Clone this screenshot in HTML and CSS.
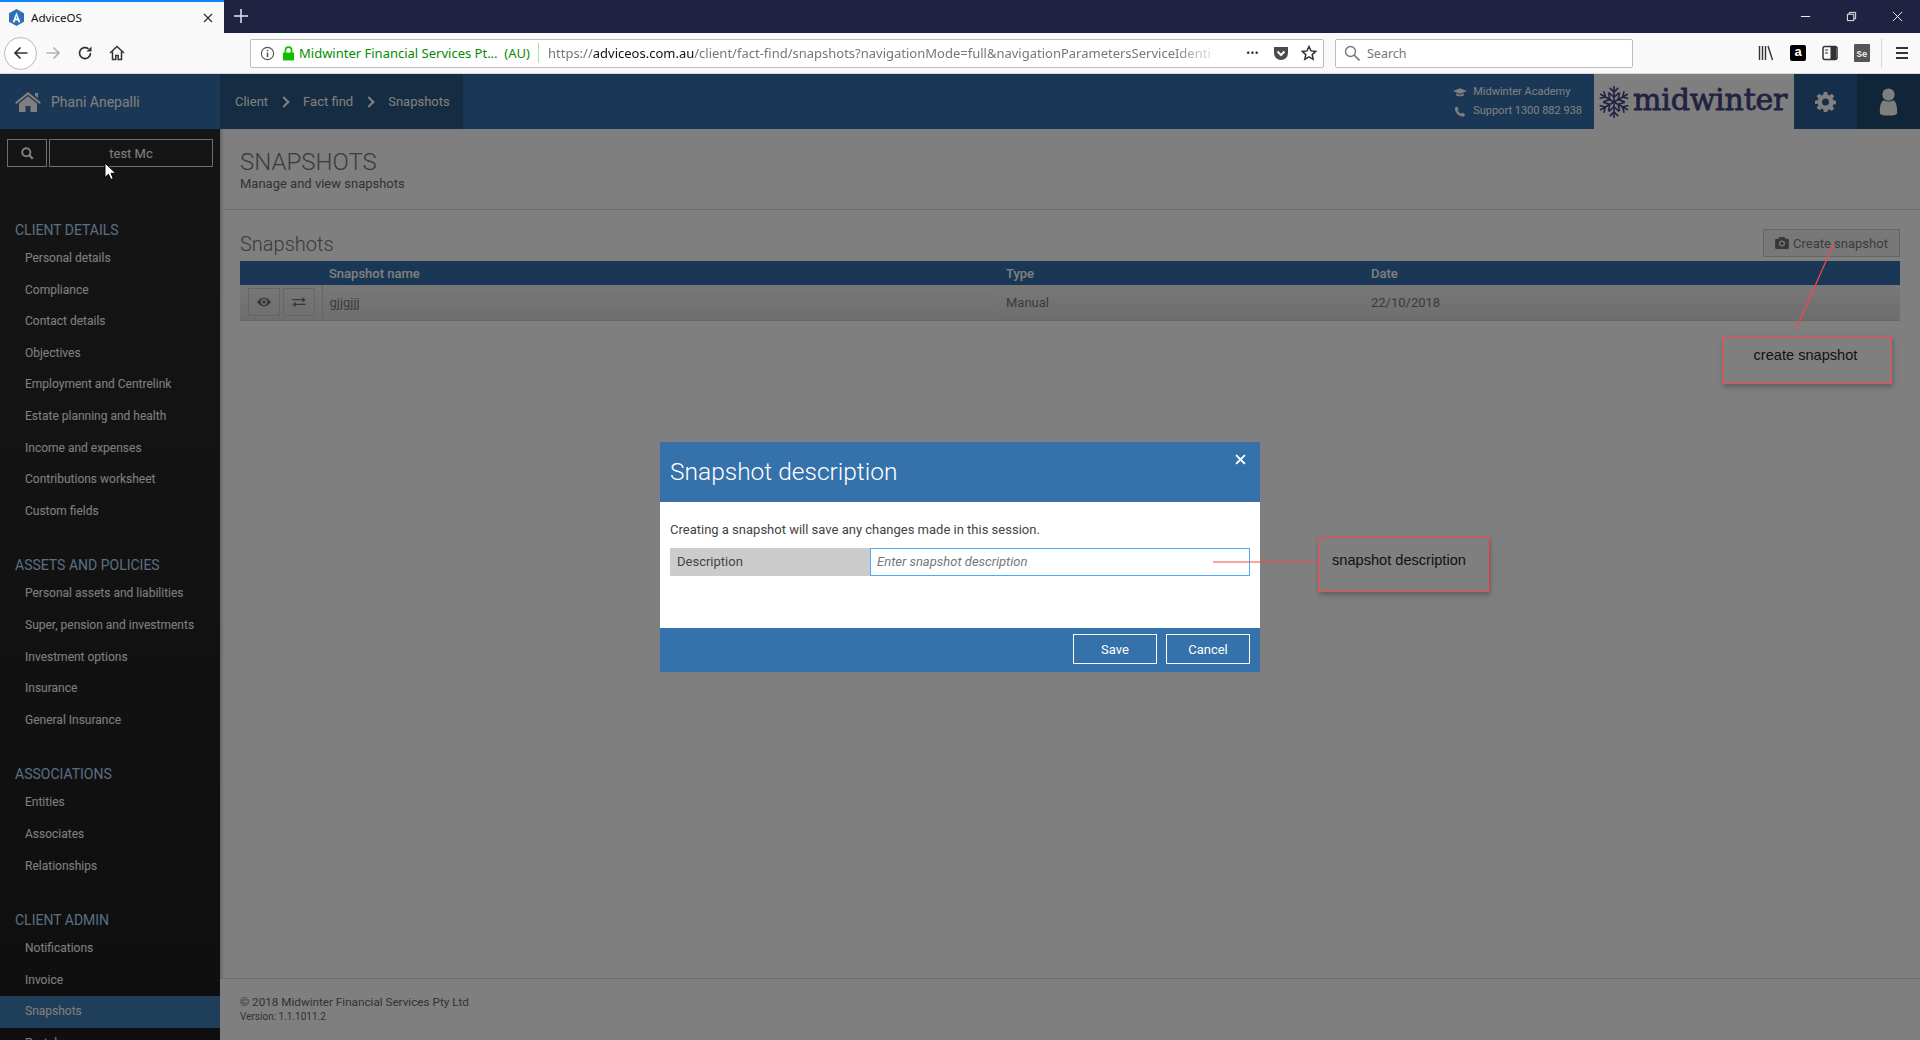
FILE: index.html
```html
<!DOCTYPE html>
<html lang="en">
<head>
  <meta charset="UTF-8" />
  <title>AdviceOS</title>
  <link rel="stylesheet" href="styles.css">
</head>
<body>

  <!-- Browser tab strip -->
  <div class="tabstrip">
    <div class="tab">
      <svg class="tab-logo" viewBox="0 0 16 18"><path d="M8 0l8 4.500v9L8 18l-8-4.500v-9z" fill="#2f6fb5"/><path d="M8 3.500l4.200 10.500h-2.200l-.7-2H6.700L6 14H3.800zM8 7.500L7.300 10h1.400z" fill="#fff"/></svg>
      <span class="tab-title">AdviceOS</span>
      <svg class="tab-close" viewBox="0 0 10 10"><path d="M1 1l8 8M9 1l-8 8" stroke="#333" stroke-width="1.300"/></svg>
    </div>
    <svg class="tab-new" viewBox="0 0 14 14"><path d="M7 0v14M0 7h14" stroke="#e6e6ea" stroke-width="1.500"/></svg>
    <div class="win-controls">
      <svg viewBox="0 0 12 12"><path d="M1 6h10" stroke="#fff"/></svg>
      <svg viewBox="0 0 12 12"><path d="M1.500 3.500h7v7h-7zM3.500 3.500v-2h7v7h-2" stroke="#fff" fill="none"/></svg>
      <svg viewBox="0 0 12 12"><path d="M1 1l10 10M11 1L1 11" stroke="#fff"/></svg>
    </div>
  </div>

  <!-- Browser toolbar -->
  <div class="toolbar">
    <div class="nav-buttons">
      <span class="back-btn"><svg viewBox="0 0 16 16"><path d="M14.500 8H2M7.500 2.500L2 8l5.500 5.500" stroke="#333" stroke-width="1.700" fill="none"/></svg></span>
      <span class="nav-btn"><svg viewBox="0 0 16 16"><path d="M1.500 8H14M8.500 2.500L14 8l-5.500 5.500" stroke="#b4b4b6" stroke-width="1.700" fill="none"/></svg></span>
      <span class="nav-btn"><svg viewBox="0 0 16 16"><path d="M13.500 8A5.500 5.500 0 1 1 11.500 3.800" stroke="#333" stroke-width="1.700" fill="none"/><path d="M14.500 1.500v5h-5z" fill="#333"/></svg></span>
      <span class="nav-btn"><svg viewBox="0 0 16 16"><path d="M1 8l7-6.500L15 8M3.500 6.500V14.500h3.300v-4h2.400v4h3.300V6.500" stroke="#333" stroke-width="1.500" fill="none"/></svg></span>
    </div>
    <div class="urlbar">
      <svg class="url-info" viewBox="0 0 16 16"><circle cx="8" cy="8" r="6.500" stroke="#555" fill="none" stroke-width="1.200"/><path d="M8 7v5M8 4v1.600" stroke="#555" stroke-width="1.600"/></svg>
      <svg class="url-lock" viewBox="0 0 14 16"><path d="M1 7h12v8.500H1z" fill="#12bc00"/><path d="M3.700 7.500V4.500a3.300 3.300 0 0 1 6.600 0v3" stroke="#12bc00" stroke-width="1.800" fill="none"/></svg>
      <span class="url-org">Midwinter Financial Services Pt...&nbsp; (AU)</span>
      <span class="url-divider"></span>
      <span class="url-text">https://<b>adviceos.com.au</b>/client/fact-find/snapshots?navigationMode=full&amp;navigationParametersServiceIdenti</span>
      <span class="url-dots">•••</span>
      <svg class="url-icon" viewBox="0 0 16 16"><path d="M1 2h14a1 1 0 0 1 0 .5V8a7 7 0 0 1-14 0V2.500A1 1 0 0 1 1 2z" fill="#4a4a4f"/><path d="M4.500 6.500L8 10l3.500-3.500" stroke="#fff" stroke-width="2" fill="none"/></svg>
      <svg class="url-icon" viewBox="0 0 16 16"><path d="M8 1.500l2 4.400 4.800.5-3.600 3.200 1 4.700L8 11.900l-4.200 2.400 1-4.700L1.200 6.400 6 5.900z" stroke="#333" stroke-width="1.500" fill="none"/></svg>
    </div>
    <div class="searchbar">
      <svg viewBox="0 0 16 16"><circle cx="6.500" cy="6.500" r="5" stroke="#777" stroke-width="1.400" fill="none"/><path d="M10 10l5.500 5.500" stroke="#777" stroke-width="1.600"/></svg>
      <span>Search</span>
    </div>
    <div class="tool-icons">
      <svg viewBox="0 0 16 16"><path d="M1.500 1v14M4.500 1v14M7.500 1v14M10 1l4.500 14" stroke="#333" stroke-width="1.400" fill="none"/></svg>
      <span class="amazon-icon">a</span>
      <svg viewBox="0 0 16 16"><rect x="1" y="1.500" width="14" height="13" rx="2" stroke="#333" stroke-width="1.500" fill="none"/><path d="M8.500 2v12h5.500V2z" fill="#333"/><path d="M3 5h3M3 8h3" stroke="#333"/></svg>
      <span class="se-icon">Se</span>
      <span class="tool-sep"></span>
      <svg viewBox="0 0 16 16"><path d="M2 3h12M2 8h12M2 13h12" stroke="#333" stroke-width="1.800"/></svg>
    </div>
  </div>

  <!-- The page itself, with modal open -->
  <div class="page">
    <header class="app-header">
      <div class="user-home">
        <svg viewBox="0 0 26 20"><path d="M13 0l13 10.500-1.300 1.500L13 2.700 1.300 12 0 10.500zM4 11.500L13 4.300l9 7.200V20h-6.500v-6h-5v6H4zM20 1h3v5l-3-2.500z" fill="#fff"/></svg>
        <span>Phani Anepalli</span>
      </div>
      <nav class="crumbs">
        <a>Client</a><i class="chev"></i><a>Fact find</a><i class="chev"></i><a>Snapshots</a>
      </nav>
      <div class="header-links">
        <div>
          <svg viewBox="0 0 20 14"><path d="M10 1l10 4-10 4L0 5zM4.500 8.500V11c2 2 9 2 11 0V8.500L10 10.700z" fill="#fff"/></svg>
          Midwinter Academy
        </div>
        <div>
          <svg viewBox="0 0 14 14"><path d="M3 .5l2.500 3.500-1.500 1.500c.7 1.800 2.300 3.500 4.300 4.300L10 8.300l3.500 2.500c-.4 1.500-1.500 2.700-2.800 2.700C5.500 13.500.5 8.500.5 3.300.5 2 1.500.9 3 .5z" fill="#fff"/></svg>
          Support 1300 882 938
        </div>
      </div>
      <div class="logo">
        <svg class="logo-flake" viewBox="-18 -18 36 36">
          <g stroke="#3f4782" stroke-width="1.700" fill="none">
            <path d="M0 0V-17M-4.500 -15L0 -10.500 4.500 -15M-5.500 -10L0 -5 5.500 -10"/>
            <path transform="rotate(60)" d="M0 0V-17M-4.500 -15L0 -10.500 4.500 -15M-5.500 -10L0 -5 5.500 -10"/>
            <path transform="rotate(120)" d="M0 0V-17M-4.500 -15L0 -10.500 4.500 -15M-5.500 -10L0 -5 5.500 -10"/>
            <path transform="rotate(180)" d="M0 0V-17M-4.500 -15L0 -10.500 4.500 -15M-5.500 -10L0 -5 5.500 -10"/>
            <path transform="rotate(240)" d="M0 0V-17M-4.500 -15L0 -10.500 4.500 -15M-5.500 -10L0 -5 5.500 -10"/>
            <path transform="rotate(300)" d="M0 0V-17M-4.500 -15L0 -10.500 4.500 -15M-5.500 -10L0 -5 5.500 -10"/>
          </g>
        </svg>
        <span class="logo-text">midwinter</span>
      </div>
      <div class="gear-btn">
        <svg viewBox="0 0 24 24"><path fill-rule="evenodd" d="M10 1h4l.6 3.200 1.900.8 2.700-1.900 2.800 2.800-1.900 2.700.8 1.900L24 11v4l-3.100.5-.8 1.900 1.900 2.700-2.800 2.800-2.700-1.900-1.900.8L14 24h-4l-.6-3.200-1.900-.8-2.700 1.900L2 19.100l1.900-2.700-.8-1.900L0 15v-4l3.100-.5.800-1.900L2 5.900 4.800 3.100 7.500 5l1.900-.8zM12 8.500a4 4 0 1 0 0 8 4 4 0 0 0 0-8z" fill="#fff"/></svg>
      </div>
      <div class="user-btn">
        <svg viewBox="0 0 22 34"><circle cx="11" cy="8" r="7.500" fill="#fff"/><path d="M5 15c-3 2-4.500 6-4.500 15 0 2 3 3.500 10.500 3.500S21.500 32 21.500 30c0-9-1.500-13-4.500-15-3.500 2-8.500 2-12 0z" fill="#fff"/></svg>
      </div>
    </header>

    <div class="app-body">
      <aside class="sidebar">
        <div class="side-search">
          <span class="side-search-btn"><svg viewBox="0 0 16 16"><circle cx="6.500" cy="6.500" r="5" stroke="#fff" stroke-width="2.400" fill="none"/><path d="M10 10l4.500 4.500" stroke="#fff" stroke-width="2.800"/></svg></span>
          <span class="side-search-box">test Mc</span>
        </div>

        <h3>CLIENT DETAILS</h3>
        <a>Personal details</a>
        <a>Compliance</a>
        <a>Contact details</a>
        <a>Objectives</a>
        <a>Employment and Centrelink</a>
        <a>Estate planning and health</a>
        <a>Income and expenses</a>
        <a>Contributions worksheet</a>
        <a>Custom fields</a>

        <h3>ASSETS AND POLICIES</h3>
        <a>Personal assets and liabilities</a>
        <a>Super, pension and investments</a>
        <a>Investment options</a>
        <a>Insurance</a>
        <a>General Insurance</a>

        <h3>ASSOCIATIONS</h3>
        <a>Entities</a>
        <a>Associates</a>
        <a>Relationships</a>

        <h3>CLIENT ADMIN</h3>
        <a>Notifications</a>
        <a>Invoice</a>
        <a class="active">Snapshots</a>
        <a>Portal</a>
      </aside>

      <main class="content">
        <div class="page-head">
          <h1>SNAPSHOTS</h1>
          <p>Manage and view snapshots</p>
        </div>

        <section class="panel">
          <div class="panel-title">
            <h2>Snapshots</h2>
            <button class="create-btn">
              <svg viewBox="0 0 16 14"><path fill-rule="evenodd" d="M5 0h6l1 2h2.500A1.500 1.500 0 0 1 16 3.500v9a1.500 1.500 0 0 1-1.500 1.500h-13A1.500 1.500 0 0 1 0 12.500v-9A1.500 1.500 0 0 1 1.500 2H4zM8 4a3.500 3.500 0 1 0 0 7 3.500 3.500 0 0 0 0-7zm0 1.500a2 2 0 1 1 0 4 2 2 0 0 1 0-4z" fill="#707070"/></svg>
              Create snapshot
            </button>
          </div>
          <table class="snap-table">
            <colgroup>
              <col class="col-actions"><col class="col-name"><col class="col-type"><col>
            </colgroup>
            <thead>
              <tr><th></th><th>Snapshot name</th><th>Type</th><th>Date</th></tr>
            </thead>
            <tbody>
              <tr>
                <td class="row-actions">
                  <span class="row-btn"><svg viewBox="0 0 16 10"><path fill-rule="evenodd" d="M8 0c3.500 0 6.300 2.300 8 5-1.700 2.700-4.500 5-8 5S1.700 7.700 0 5c1.700-2.700 4.500-5 8-5zm0 1.500a3.500 3.500 0 1 0 0 7 3.500 3.500 0 0 0 0-7z" fill="#707070"/><circle cx="8" cy="5" r="2" fill="#707070"/></svg></span>
                  <span class="row-btn"><svg viewBox="0 0 16 12"><path d="M0 2.500h12V0l4 3.500-4 3V4H0zM16 8H4V5.500L0 9l4 3V9.500h12z" fill="#707070"/></svg></span>
                </td>
                <td><a class="snap-link">gjjgjjj</a></td>
                <td>Manual</td>
                <td>22/10/2018</td>
              </tr>
            </tbody>
          </table>
        </section>

        <footer class="page-foot">
          <div class="copy">© 2018 Midwinter Financial Services Pty Ltd</div>
          <div class="version">Version: 1.1.1011.2</div>
        </footer>
      </main>
    </div>

    <!-- Modal -->
    <div class="backdrop">
      <div class="modal">
        <div class="modal-head">
          <h2>Snapshot description</h2>
          <svg class="modal-close" viewBox="0 0 10 10"><path d="M1 1l8 8M9 1l-8 8" stroke="#fff" stroke-width="1.800"/></svg>
        </div>
        <div class="modal-body">
          <p>Creating a snapshot will save any changes made in this session.</p>
          <div class="field">
            <label>Description</label>
            <input type="text" placeholder="Enter snapshot description">
          </div>
        </div>
        <div class="modal-foot">
          <button>Save</button>
          <button>Cancel</button>
        </div>
      </div>
    </div>
  </div>

  <!-- Red notes drawn on top of the screenshot -->
  <svg class="note-lines" viewBox="0 0 1920 1040">
    <path d="M1834 243L1796 329M1213 562H1318" stroke="#ff4545" stroke-width="1.200" fill="none"/>
  </svg>
  <div class="note note-create">create snapshot</div>
  <div class="note note-desc">snapshot description</div>

  <svg class="cursor" viewBox="0 0 12 19"><path d="M1 1v14.500l3.500-3.300 2.300 5.300 2.500-1-2.300-5.200h4.800z" fill="#fff" stroke="#000"/></svg>

</body>
</html>
```

FILE: styles.css
```css
* {
  box-sizing: border-box;
}

html, body {
  height: 100%;
}

body {
  margin: 0;
  position: relative;
  overflow: hidden;
  font-family: 'Roboto', sans-serif;
  font-size: 13px;
  color: #888;
  background: #fff;
}

/* Browser chrome */
.tabstrip {
  display: flex;
  align-items: stretch;
  height: 33px;
  background: #1f2341;
  font-family: 'Noto Sans', sans-serif;
}

.tab {
  display: flex;
  align-items: center;
  width: 224px;
  padding: 0 11px 0 9px;
  background: #f9f9fa;
  border-top: 2px solid #0a84ff;
  font-size: 11.6px;
  color: #111;
}

.tab-logo {
  width: 15px;
  height: 17px;
}

.tab-title {
  flex: 1;
  margin-left: 7px;
}

.tab-close {
  width: 10px;
  height: 10px;
}

.tab-new {
  width: 14px;
  height: 14px;
  margin: 9px 0 0 10px;
}

.win-controls {
  display: flex;
  align-items: center;
  gap: 35px;
  margin-left: auto;
  padding-right: 17px;
}

.win-controls svg {
  width: 11px;
  height: 11px;
}

.toolbar {
  display: flex;
  align-items: center;
  height: 41px;
  background: #f9f9fa;
  border-bottom: 1px solid #d8d8da;
  font-family: 'Noto Sans', sans-serif;
  font-size: 13px;
}

.nav-buttons {
  display: flex;
  align-items: center;
  width: 250px;
  padding-left: 4px;
}

.back-btn {
  display: flex;
  align-items: center;
  justify-content: center;
  width: 33px;
  height: 33px;
  border: 1px solid #b8b8ba;
  border-radius: 50%;
  background: #fff;
}

.back-btn svg {
  width: 16px;
  height: 16px;
}

.nav-btn {
  display: flex;
  justify-content: center;
  width: 32px;
}

.nav-btn svg {
  width: 16px;
  height: 16px;
}

.urlbar {
  display: flex;
  align-items: center;
  width: 1074px;
  height: 29px;
  padding: 0 6px 0 9px;
  background: #fff;
  border: 1px solid #bdbdbd;
  border-radius: 2px;
}

.url-info {
  width: 15px;
  height: 15px;
}

.url-lock {
  width: 13px;
  height: 15px;
  margin-left: 7px;
}

.url-org {
  margin-left: 4px;
  color: #058b00;
  white-space: nowrap;
}

.url-divider {
  width: 1px;
  height: 20px;
  margin: 0 9px 0 8px;
  background: #a9e5a4;
}

.url-text {
  flex: 1;
  overflow: hidden;
  white-space: nowrap;
  color: #777;
  -webkit-mask-image: linear-gradient(to right, #000 93%, transparent 100%);
}

.url-text b {
  font-weight: 400;
  color: #111;
}

.url-dots {
  margin: 0 7px 0 25px;
  font-size: 10px;
  letter-spacing: 0.5px;
  color: #333;
}

.url-icon {
  width: 16px;
  height: 16px;
  margin-left: 7px;
}

.url-icon + .url-icon {
  margin-left: 12px;
}

.searchbar {
  display: flex;
  align-items: center;
  gap: 7px;
  width: 298px;
  height: 29px;
  margin-left: 11px;
  padding-left: 8px;
  background: #fff;
  border: 1px solid #bdbdbd;
  border-radius: 2px;
  font-size: 12.5px;
  color: #777;
}

.searchbar svg {
  width: 16px;
  height: 16px;
}

.tool-icons {
  display: flex;
  align-items: center;
  gap: 16px;
  margin-left: 125px;
}

.tool-icons svg {
  width: 16px;
  height: 16px;
}

.amazon-icon {
  width: 16px;
  height: 16px;
  border-radius: 2px;
  background: #000;
  color: #fff;
  font: 700 13px/14px 'Liberation Sans', sans-serif;
  text-align: center;
}

.se-icon {
  width: 16px;
  height: 18px;
  padding-top: 5px;
  border-radius: 1px;
  background: #555;
  color: #eee;
  font: 700 9px/12px 'Liberation Mono', monospace;
  text-align: center;
}

.tool-sep {
  width: 1px;
  height: 30px;
  margin: 0 -4px 0 -5px;
  background: #d8d8da;
}

/* App */
.page {
  position: relative;
  display: flex;
  flex-direction: column;
  height: 966px;
  overflow: hidden;
}

.app-header {
  display: flex;
  align-items: stretch;
  flex: none;
  height: 55px;
  background: #3570aa;
  color: #fff;
}

.user-home {
  display: flex;
  align-items: center;
  width: 220px;
  padding-left: 15px;
  font-size: 14px;
}

.user-home svg {
  width: 26px;
  height: 20px;
  margin-right: 10px;
}

.crumbs {
  display: flex;
  align-items: center;
  width: 243px;
  padding-left: 15px;
  background: #2a5887;
  font-size: 13px;
}

.chev {
  width: 8px;
  height: 8px;
  margin: 0 15px 0 12px;
  border-top: 2px solid #fff;
  border-right: 2px solid #fff;
  transform: rotate(45deg);
}

.header-links {
  display: flex;
  flex-direction: column;
  justify-content: center;
  gap: 7px;
  margin-left: auto;
  padding-right: 12px;
  font-size: 11px;
  line-height: 12px;
}

.header-links div {
  display: flex;
  align-items: center;
}

.header-links svg {
  width: 14px;
  height: 11px;
  margin-right: 6px;
}

.logo {
  display: flex;
  align-items: center;
  width: 200px;
  padding-left: 3px;
  background: #fff;
}

.logo-flake {
  width: 34px;
  height: 36px;
}

.logo-text {
  margin: -4px 0 0 2px;
  color: #3f4782;
  font: 400 30px/36px 'DejaVu Serif', serif;
  -webkit-text-stroke: 0.8px #3f4782;
  letter-spacing: -0.2px;
}

.gear-btn,
.user-btn {
  display: flex;
  align-items: center;
  justify-content: center;
  width: 63px;
  background: #2a5f95;
}

.gear-btn svg {
  width: 21px;
  height: 21px;
}

.user-btn {
  background: #234a72;
}

.user-btn svg {
  width: 21px;
  height: 28px;
}

.app-body {
  display: flex;
  flex: 1;
  min-height: 0;
}

/* Sidebar */
.sidebar {
  flex: none;
  width: 220px;
  background: linear-gradient(#2a2a2a, #1e1e1e);
  color: #fff;
  font-size: 12px;
}

.side-search {
  display: flex;
  gap: 2px;
  padding: 10px 7px 0;
  margin-bottom: 50px;
}

.side-search span {
  display: flex;
  align-items: center;
  justify-content: center;
  height: 28px;
  border: 1px solid #ddd;
}

.side-search-btn {
  width: 40px;
}

.side-search-btn svg {
  width: 13px;
  height: 13px;
}

.side-search-box {
  width: 164px;
  font-size: 13px;
}

.sidebar h3 {
  height: 26px;
  margin: 25px 0 0;
  padding-left: 15px;
  font-size: 14px;
  font-weight: 400;
  line-height: 26px;
  color: #b5dcff;
}

.side-search + h3 {
  margin-top: 0;
}

.sidebar a {
  display: block;
  height: 31.6px;
  padding-left: 25px;
  line-height: 31.6px;
}

.sidebar a.active {
  background: #3e7cb3;
}

/* Content */
.content {
  display: flex;
  flex: 1;
  flex-direction: column;
  min-width: 0;
  box-shadow: inset 4px 0 4px -3px rgba(0, 0, 0, 0.3);
}

.page-head {
  height: 81px;
  padding: 19px 20px 0;
  border-bottom: 1px solid #ddd;
}

.page-head h1 {
  margin: 0;
  font-size: 24px;
  font-weight: 300;
  line-height: 28px;
  color: #777;
}

.page-head p {
  margin: 0;
  font-size: 13px;
  line-height: 16px;
  color: #666;
}

.panel {
  padding: 19px 20px 0;
}

.panel-title {
  display: flex;
  align-items: center;
  justify-content: space-between;
  height: 28px;
  margin-bottom: 4px;
}

.panel-title h2 {
  margin: 2px 0 0;
  font-size: 20px;
  font-weight: 300;
  color: #777;
}

.create-btn {
  display: flex;
  align-items: center;
  gap: 4px;
  width: 137px;
  height: 28px;
  padding: 0 0 0 11px;
  background: #f1f1f1;
  border: 1px solid #ccc;
  font-family: inherit;
  font-size: 13px;
  color: #777;
}

.create-btn svg {
  width: 14px;
  height: 12px;
}

.snap-table {
  width: 100%;
  border-collapse: collapse;
  table-layout: fixed;
}

.col-actions {
  width: 82px;
}

.col-name {
  width: 677px;
}

.col-type {
  width: 365px;
}

.snap-table th {
  height: 24px;
  padding: 0 7px;
  background: #3570aa;
  color: #fff;
  font-size: 13px;
  font-weight: 500;
  text-align: left;
}

.snap-table td {
  height: 35px;
  padding: 0 7px;
  background: linear-gradient(#f0f0f0, #dcdcdc);
  border-bottom: 1px solid #ccc;
  color: #777;
  font-size: 13px;
}

.snap-table td.row-actions {
  padding: 0 0 0 8px;
  border-right: 1px solid #ccc;
  font-size: 0;
  line-height: 0;
  white-space: nowrap;
}

.row-btn {
  display: inline-flex;
  align-items: center;
  justify-content: center;
  width: 32px;
  height: 28px;
  margin-right: 3px;
  border: 1px solid #ccc;
  vertical-align: middle;
}

.row-btn svg {
  width: 14px;
  height: 10px;
}

.snap-link {
  color: #777;
  text-decoration: underline;
}

.page-foot {
  margin-top: auto;
  height: 62px;
  padding-top: 16px;
  border-top: 1px solid #ddd;
  background: #fff;
  color: #666;
}

.copy {
  padding-left: 20px;
  font-size: 11.7px;
  line-height: 15px;
}

.version {
  padding-left: 20px;
  font-size: 10px;
  line-height: 13px;
}

/* Modal */
.backdrop {
  position: absolute;
  top: 0;
  left: 0;
  width: 100%;
  height: 100%;
  display: flex;
  align-items: center;
  justify-content: center;
  background: rgba(0, 0, 0, 0.5);
}

.modal {
  display: flex;
  flex-direction: column;
  width: 600px;
  height: 230px;
  background: #fff;
}

.modal-head {
  position: relative;
  height: 60px;
  padding: 0 10px;
  background: #3571ab;
}

.modal-head h2 {
  margin: 0;
  color: #fff;
  font-size: 24.5px;
  font-weight: 300;
  line-height: 60px;
}

.modal-close {
  position: absolute;
  top: 12px;
  right: 14px;
  width: 11px;
  height: 11px;
}

.modal-body {
  flex: 1;
  padding: 20px 10px 0;
  color: #444;
}

.modal-body p {
  margin: 0 0 10px;
  font-size: 13px;
  line-height: 16px;
}

.field {
  display: flex;
  height: 28px;
}

.field label {
  width: 200px;
  padding-left: 7px;
  background: #ccc;
  font-size: 13px;
  line-height: 27px;
}

.field input {
  flex: 1;
  padding: 0 6px 2px;
  border: 1px solid #4da8f5;
  outline: none;
  font-family: inherit;
  font-size: 13px;
}

.field input::placeholder {
  color: #777;
  font-style: italic;
}

.modal-foot {
  display: flex;
  justify-content: flex-end;
  gap: 9px;
  height: 44px;
  padding: 6px 10px 0;
  background: #3571ab;
}

.modal-foot button {
  width: 84px;
  height: 30px;
  background: transparent;
  border: 1px solid #fff;
  color: #fff;
  font-family: inherit;
  font-size: 13px;
}

/* Notes over the screenshot */
.note-lines {
  position: absolute;
  top: 0;
  left: 0;
  width: 1920px;
  height: 1040px;
  pointer-events: none;
}

.note {
  position: absolute;
  border: 1px solid #ff4545;
  box-shadow: 1px 3px 5px rgba(0, 0, 0, 0.25);
  font-family: 'Liberation Sans', sans-serif;
  font-size: 14.6px;
  color: #111;
}

.note-create {
  top: 336px;
  left: 1722px;
  width: 170px;
  height: 48px;
  padding-top: 10px;
  padding-right: 3px;
  text-align: center;
}

.note-desc {
  top: 537px;
  left: 1318px;
  width: 171px;
  height: 55px;
  padding: 14px 0 0 13px;
}

.cursor {
  position: absolute;
  top: 162px;
  left: 104px;
  width: 12px;
  height: 19px;
}
```
